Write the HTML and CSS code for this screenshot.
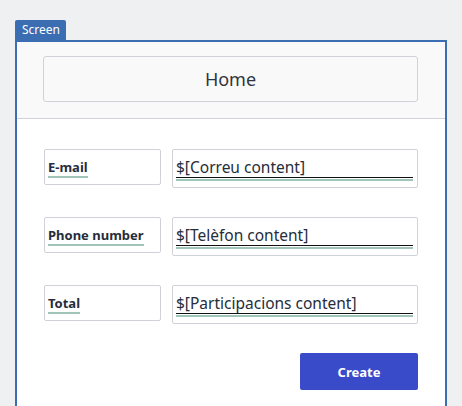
FILE: index.html
```html
<!DOCTYPE html>
<html>
<head>
<meta charset="utf-8">
<link rel="stylesheet" href="styles.css">
</head>
<body>
<div class="canvas">
  <div class="tab">Screen</div>
  <div class="frame">
    <div class="header">
      <div class="title">Home</div>
    </div>
    <div class="form">
      <div class="row">
        <div class="label"><span>E-mail</span></div>
        <div class="value"><div class="line"><span>$[Correu content]</span></div></div>
      </div>
      <div class="row">
        <div class="label"><span>Phone number</span></div>
        <div class="value"><div class="line"><span>$[Telèfon content]</span></div></div>
      </div>
      <div class="row">
        <div class="label"><span>Total</span></div>
        <div class="value"><div class="line"><span>$[Participacions content]</span></div></div>
      </div>
      <div class="actions">
        <button class="create">Create</button>
      </div>
    </div>
  </div>
</div>
</body>
</html>
```

FILE: styles.css
```css
html, body {
  margin: 0;
  padding: 0;
  background: #eff0f2;
  font-family: "Noto Sans", "Open Sans", sans-serif;
  overflow: hidden;
}
.canvas {
  padding: 20px 0 0 15px;
  width: 432px;
  display: flex;
  flex-direction: column;
  align-items: flex-start;
}
.tab {
  background: #3a6db1;
  color: #ffffff;
  font-size: 12px;
  line-height: 20px;
  height: 20px;
  padding: 0 6px 0 7px;
  border-radius: 2px 2px 0 0;
}
.frame {
  align-self: stretch;
  border: 2px solid #3a6db1;
  border-bottom: none;
  background: #ffffff;
  height: 380px;
  box-sizing: border-box;
}
.header {
  background: #f9f9f9;
  border-bottom: 1px solid #d1d1da;
  height: 77px;
  padding: 14px 0 0 26px;
  box-sizing: border-box;
}
.title {
  width: 375px;
  height: 46px;
  box-sizing: border-box;
  border: 1px solid #d1d1da;
  border-radius: 3px;
  background: #f9f9f9;
  display: flex;
  align-items: center;
  justify-content: center;
  font-size: 18px;
  color: #2f3540;
}
.form {
  padding: 30px 0 0 27px;
}
.row {
  display: flex;
  align-items: flex-start;
  gap: 11px;
  margin-bottom: 29px;
}
.label {
  width: 117px;
  height: 36px;
  box-sizing: border-box;
  border: 1px solid #d1d1da;
  border-radius: 2px;
  padding: 5px 0 0 3px;
}
.label span {
  display: inline-block;
  font-size: 13px;
  font-weight: bold;
  color: #262d3b;
  line-height: 17px;
  border-bottom: 2px solid #a1c4b9;
}
.value {
  width: 246px;
  height: 39px;
  box-sizing: border-box;
  border: 1px solid #d1d1da;
  border-radius: 2px;
  padding: 7px 4px 0 3px;
}
.line {
  border-bottom: 2px solid #a1c4b9;
}
.line span {
  display: block;
  font-size: 15.5px;
  line-height: 20px;
  color: #262d3b;
  border-bottom: 1px solid #111111;
  margin-bottom: 1px;
  white-space: nowrap;
}
.actions {
  display: flex;
  justify-content: flex-end;
  width: 374px;
}
.create {
  width: 118px;
  height: 37px;
  border: none;
  border-radius: 2px;
  background: #394bc8;
  color: #ffffff;
  font-family: "Noto Sans", "Open Sans", sans-serif;
  font-size: 13px;
  font-weight: bold;
}
```
